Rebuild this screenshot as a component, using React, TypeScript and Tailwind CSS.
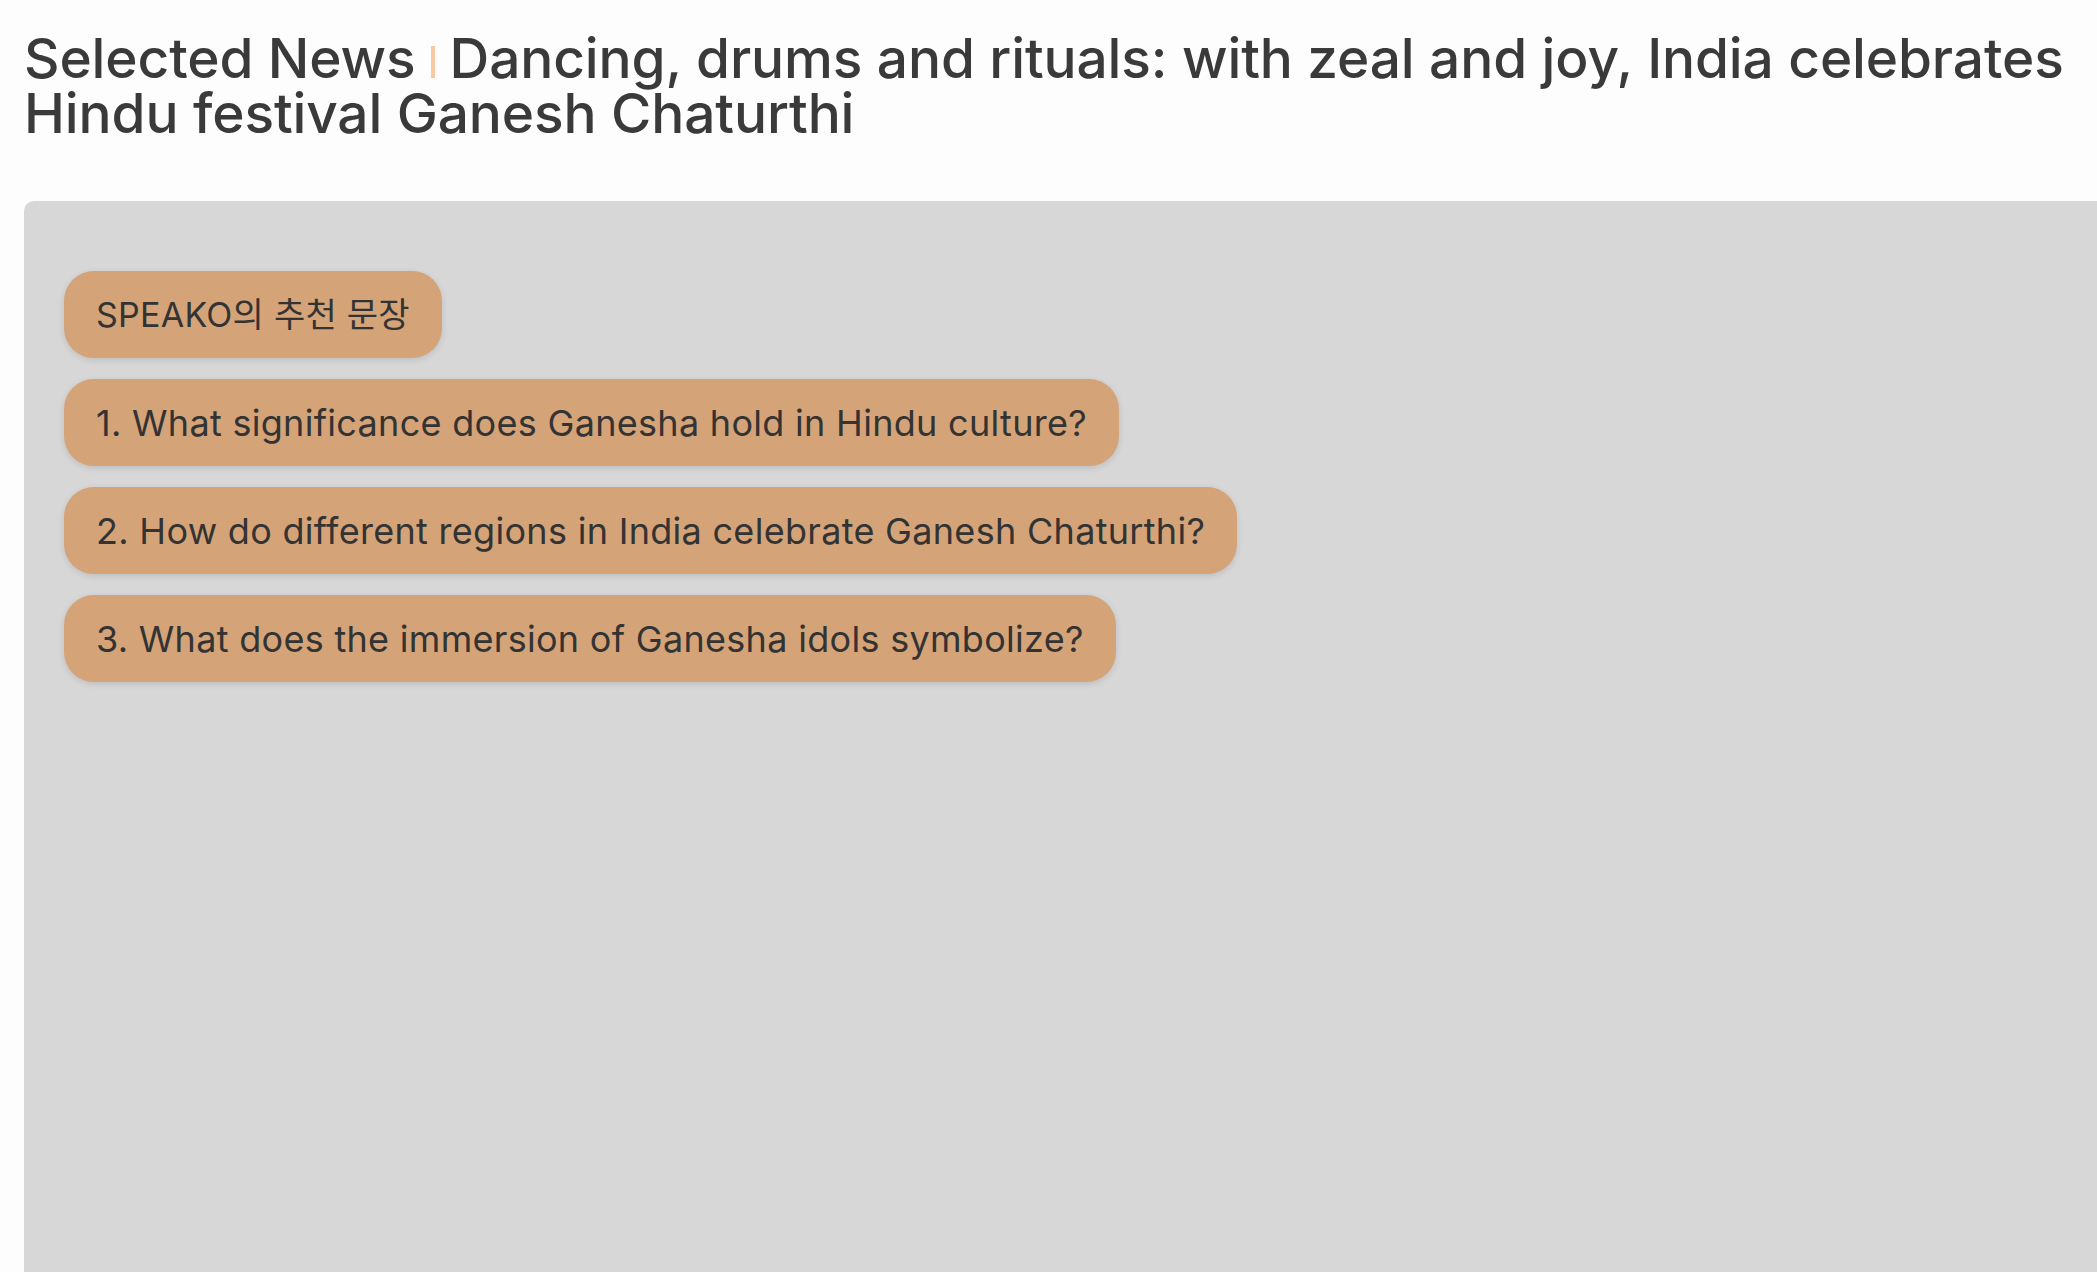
export default function App() {
  const questions = [
    "1. What significance does Ganesha hold in Hindu culture?",
    "2. How do different regions in India celebrate Ganesh Chaturthi?",
    "3. What does the immersion of Ganesha idols symbolize?",
  ];

  return (
    <main className="h-screen overflow-hidden bg-[#fdfdfd] pl-6 font-['Inter','Noto_Sans_CJK_KR',sans-serif] text-[#3a3a3a]">
      {/* ================= TITLE ================= */}
      <h1 className="w-[2073px] pt-[31px] text-[55px] font-medium leading-[55px] tracking-[-0.12px]">
        Selected News
        <span className="mx-[15px] inline-block h-[32px] w-[4px] bg-[#f9c9a0] align-[0px]" />
        Dancing, drums and rituals: with zeal and joy, India celebrates Hindu festival Ganesh Chaturthi
      </h1>

      {/* ================= PANEL ================= */}
      <section className="mt-[60px] h-[1200px] w-[2200px] rounded-tl-[10px] bg-[#d7d7d7] pl-10 pt-[70px]">
        <div className="flex flex-col items-start gap-[21px]">
          <div className="flex h-[87px] items-center rounded-[30px] bg-[#d5a378] px-8 text-[34px] tracking-[0.25px] text-[#333333] shadow-[0_2px_6px_rgba(0,0,0,0.12)]">
            SPEAKO의 추천 문장
          </div>
          {questions.map((q) => (
            <div
              key={q}
              className="flex h-[87px] items-center rounded-[30px] bg-[#d5a378] px-8 text-[36px] tracking-[0.3px] text-[#333333] shadow-[0_2px_6px_rgba(0,0,0,0.12)]"
            >
              {q}
            </div>
          ))}
        </div>
      </section>
    </main>
  );
}
